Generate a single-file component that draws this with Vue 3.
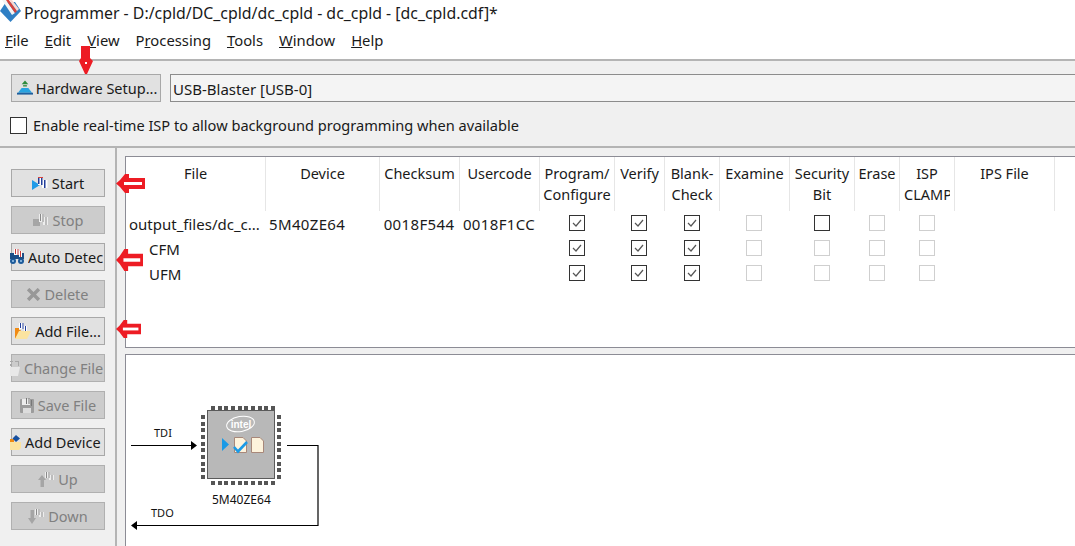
<script setup>
const menus = [
  { key: 'F', rest: 'ile' },
  { key: 'E', rest: 'dit' },
  { key: 'V', rest: 'iew' },
  { pre: 'P', key: 'r', rest: 'ocessing' },
  { key: 'T', rest: 'ools' },
  { key: 'W', rest: 'indow' },
  { key: 'H', rest: 'elp' }
]
const buttons = [
  { label: 'Start', icon: 'start' },
  { label: 'Stop', icon: 'stop', off: true },
  { label: 'Auto Detect', icon: 'auto', left: true, cut: true },
  { label: 'Delete', icon: 'delete', off: true },
  { label: 'Add File...', icon: 'add' },
  { label: 'Change File', icon: 'change', off: true, left: true },
  { label: 'Save File', icon: 'save', off: true },
  { label: 'Add Device', icon: 'device', left: true },
  { label: 'Up', icon: 'up', off: true },
  { label: 'Down', icon: 'down', off: true }
]
const headers = [
  { lines: ['File'] }, { lines: ['Device'] }, { lines: ['Checksum'] }, { lines: ['Usercode'] },
  { lines: ['Program/', 'Configure'] }, { lines: ['Verify'] }, { lines: ['Blank-', 'Check'] },
  { lines: ['Examine'] }, { lines: ['Security', 'Bit'] }, { lines: ['Erase'] },
  { lines: ['ISP', 'CLAMP'], narrow: true }, { lines: ['IPS File'] }
]
const rows = [
  { file: 'output_files/dc_c...', device: '5M40ZE64', checksum: '0018F544', usercode: '0018F1CC', sec: 'open' },
  { file: 'CFM', sub: true, sec: 'off' },
  { file: 'UFM', sub: true, sec: 'off' }
]
const pins = [0, 7, 13, 20, 27, 33, 40, 47, 53, 60]
const redArrows = ['a1', 'a2', 'a3']
</script>

<template>
  <div class="app">
    <header class="title">
      <svg class="logo" width="21" height="22" viewBox="0 0 21 22">
        <path d="M0 11 L6 2 L15 2 L21 11 L10.5 22 Z" fill="#2f7fc4" />
        <path d="M2 0 L6 0 L15 13 L12 15 Z" fill="#f4f4f4" />
        <path d="M6 0 L9 0 L17 11 L15 13 Z" fill="#d8433c" />
        <path d="M9 0 L12 0 L19 9 L17 11 Z" fill="#f7d9d2" />
      </svg>
      <span>Programmer - D:/cpld/DC_cpld/dc_cpld - dc_cpld - [dc_cpld.cdf]*</span>
    </header>

    <nav class="menu">
      <span v-for="m in menus" :key="m.key + m.rest">{{ m.pre }}<u>{{ m.key }}</u>{{ m.rest }}</span>
    </nav>

    <section class="toolbar">
      <div class="hw-row">
        <button class="btn hw">
          <svg width="16" height="16" viewBox="0 0 17 16">
            <path d="M8.5 0 L12 4 H5 Z" fill="#2e8b3c" />
            <rect x="6.5" y="5" width="4" height="1.4" fill="#2e8b3c" />
            <path d="M1 13 L5 8 H12 L16 13 Z" fill="#27a3e0" />
            <rect x="0" y="13" width="17" height="2" fill="#1f5f9e" />
          </svg>
          <span>Hardware Setup...</span>
        </button>
        <div class="combo">USB-Blaster [USB-0]</div>
      </div>
      <label class="isp">
        <span class="check-big"></span>
        <span>Enable real-time ISP to allow background programming when available</span>
      </label>
    </section>

    <main class="body">
      <aside class="side">
        <button v-for="b in buttons" :key="b.label" class="btn side-btn" :class="{ off: b.off, left: b.left, cut: b.cut }">
          <span class="ico">
            <svg v-if="b.icon === 'start'" width="16" height="13" viewBox="0 0 16 13">
              <path d="M0 3 L8 8 L0 13 Z" fill="#1f9be8" />
              <path d="M6 0 H11 V3 H15.5 V11 H10 V8 H6 Z" fill="#fff" />
              <path d="M6 0 H7.5 V7 H6 Z M9 0 H10.5 V8 H9 Z M12 3 H13.5 V11 H12 Z" fill="#233f9a" />
              <path d="M6 0 H11 V1 H6 Z" fill="#d8433c" />
            </svg>
            <svg v-else-if="b.icon === 'stop'" width="16" height="13" viewBox="0 0 16 13">
              <rect x="0" y="5" width="7" height="7" fill="#a6a6a6" />
              <path d="M6 0 H11 V3 H15 V11 H10 V8 H6 Z" fill="#eee" />
              <path d="M7 0 H8 V7 H7 Z M9.5 0 H10.5 V8 H9.5 Z M12.5 3 H13.5 V11 H12.5 Z" fill="#8a8a8a" />
            </svg>
            <svg v-else-if="b.icon === 'auto'" width="14" height="16" viewBox="0 0 14 16">
              <circle cx="3" cy="12" r="3" fill="#1c5a9a" />
              <circle cx="11" cy="12" r="3" fill="#1c5a9a" />
              <circle cx="3" cy="12" r="1" fill="#9cc8ec" />
              <circle cx="11" cy="12" r="1" fill="#9cc8ec" />
              <path d="M0 4 H14 V10 H0 Z" fill="#1c4d86" />
              <path d="M4 0 H9 V2 H12 V8 H9 V6 H4 Z" fill="#fff" />
              <path d="M5 0 H6 V5 H5 Z M7.5 0 H8.5 V6 H7.5 Z M10 2 H11 V8 H10 Z" fill="#c83a3a" />
            </svg>
            <svg v-else-if="b.icon === 'delete'" width="13" height="13" viewBox="0 0 12 12">
              <path d="M1 1 L11 11 M11 1 L1 11" stroke="#989898" stroke-width="3.2" />
            </svg>
            <svg v-else-if="b.icon === 'add'" width="16" height="16" viewBox="0 0 16 16">
              <path d="M0 5 H4 V7 H6 L0 16 Z" fill="#f08a12" />
              <path d="M4 8 H16 L12 16 H0 Z" fill="#fbe3a0" />
              <path d="M4 0 H9 V3 H12 V8 H9 V6 H4 Z" fill="#fff" />
              <path d="M5 0 H6 V5 H5 Z M7.5 0 H8.5 V6 H7.5 Z M10 3 H11 V8 H10 Z" fill="#233f9a" />
            </svg>
            <svg v-else-if="b.icon === 'change'" width="10" height="15" viewBox="0 0 10 15">
              <path d="M0 6 H10 L8 15 H0 Z" fill="#e8e8e8" />
              <path d="M0 0 H3 V1 H0 Z M5 0 H9 V1 H5 Z M8 1 H9 V5 H8 Z M0 3 H2 V5 H0 Z" fill="#a8a8a8" />
            </svg>
            <svg v-else-if="b.icon === 'save'" width="14" height="15" viewBox="0 0 14 15">
              <rect y="1" width="14" height="14" rx="1" fill="#9c9c9c" />
              <rect x="3" y="10" width="8" height="5" fill="#dcdcdc" />
              <rect x="2" y="1" width="8" height="6" fill="#ececec" />
              <path d="M6 0 H7 V6 H6 Z M8.5 0 H9.5 V6 H8.5 Z M11 2 H12 V8 H11 Z" fill="#777" />
            </svg>
            <svg v-else-if="b.icon === 'device'" width="11" height="15" viewBox="0 0 11 15">
              <path d="M0 7 H11 V13 L9 15 H0 Z" fill="#fbe3a0" />
              <path d="M0 4 H4 V7 H0 Z" fill="#ee8a14" />
              <path d="M6 0 L10 3.5 L6 7 L2.5 3.5 Z" fill="#164f9e" />
            </svg>
            <svg v-else-if="b.icon === 'up'" width="16" height="15" viewBox="0 0 16 15">
              <path d="M4 3 L8 8 H6 V15 H2.5 V8 H0 Z" fill="#a5a5a5" />
              <path d="M7 0 H12 V3 H16 V8 H11 V6 H7 Z" fill="#eee" />
              <path d="M8 0 H9 V6 H8 Z M10.5 0 H11.5 V6 H10.5 Z M13.5 3 H14.5 V8 H13.5 Z" fill="#8a8a8a" />
            </svg>
            <svg v-else-if="b.icon === 'down'" width="16" height="15" viewBox="0 0 16 15">
              <path d="M2.5 1 H6 V9 H8 L4 15 L0 9 H2.5 Z" fill="#a5a5a5" />
              <path d="M7 0 H12 V3 H16 V8 H11 V6 H7 Z" fill="#eee" />
              <path d="M8 0 H9 V6 H8 Z M10.5 0 H11.5 V6 H10.5 Z M13.5 3 H14.5 V8 H13.5 Z" fill="#8a8a8a" />
            </svg>
          </span>
          <span class="lbl">{{ b.label }}</span>
        </button>
      </aside>

      <div class="panels">
        <section class="table">
          <div v-for="h in headers" :key="h.lines[0]" class="th" :class="{ narrow: h.narrow }">
            <span v-for="l in h.lines" :key="l">{{ l }}</span>
          </div>
          <template v-for="r in rows" :key="r.file">
            <div class="td file" :class="{ sub: r.sub }">{{ r.file }}</div>
            <div class="td code">{{ r.device }}</div>
            <div class="td ctr code">{{ r.checksum }}</div>
            <div class="td ctr code">{{ r.usercode }}</div>
            <div class="td ctr" v-for="n in 3" :key="n">
              <span class="cb"><svg width="12" height="12" viewBox="0 0 12 12"><path d="M2 6 L5 9 L10 3" fill="none" stroke="#555" stroke-width="1.2" /></svg></span>
            </div>
            <div class="td ctr"><span class="cb dis"></span></div>
            <div class="td ctr"><span class="cb" :class="{ dis: r.sec === 'off' }"></span></div>
            <div class="td ctr"><span class="cb dis"></span></div>
            <div class="td ctr"><span class="cb dis"></span></div>
            <div class="td"></div>
          </template>
        </section>

        <section class="diagram">
          <svg class="chain" width="200" height="150" viewBox="0 0 200 150">
            <text x="28" y="41" class="t">TDI</text>
            <path d="M5 49.5 H68" stroke="#000" stroke-width="1.2" />
            <path d="M65 45 L71 49.5 L65 54 Z" fill="#000" />
            <g fill="#555">
              <rect v-for="p in pins" :key="'t' + p" :x="85 + p" y="10" width="4" height="4" />
              <rect v-for="p in pins" :key="'b' + p" :x="85 + p" y="85" width="4" height="4" />
              <rect v-for="p in pins" :key="'l' + p" x="75" :y="19 + p" width="4" height="4" />
              <rect v-for="p in pins" :key="'r' + p" x="151" :y="19 + p" width="4" height="4" />
            </g>
            <rect x="81.5" y="14.5" width="67" height="68" fill="#b8b8b8" stroke="#5a5a5a" />
            <ellipse cx="114.5" cy="28" rx="14" ry="7.5" fill="none" stroke="#fff" stroke-width="1" transform="rotate(-10 114.5 28)" />
            <text x="115" y="32" class="intel">intel</text>
            <path d="M96 42 L103 48.5 L96 55 Z" fill="#1a9ae6" />
            <path d="M108.5 41.5 H117 L120.5 45 V56.5 H108.5 Z" fill="#fdf3dc" stroke="#a8887a" />
            <path d="M108 51 L112 55.5 L121 46" fill="none" stroke="#1a9ae6" stroke-width="2.6" />
            <path d="M125.5 41.5 H134 L137.5 45 V56.5 H125.5 Z" fill="#fdf3dc" stroke="#a8887a" />
            <path d="M161 49.5 H192 V129.5 H10" fill="none" stroke="#000" stroke-width="1.2" />
            <path d="M11 125 L5 129.5 L11 134 Z" fill="#000" />
            <text x="86" y="108" class="t chip-name">5M40ZE64</text>
            <text x="25" y="121" class="t">TDO</text>
          </svg>
        </section>
      </div>
    </main>

    <svg class="arrow a-hw" width="14" height="28" viewBox="0 0 14 28">
      <path d="M2 0 H11 V12 L14 15 L8 28 H6 L0 15 L2 12 Z" fill="#ed1c24" />
      <rect x="6" y="16" width="2" height="2" fill="#fff" />
    </svg>
    <svg v-for="a in redArrows" :key="a" class="arrow" :class="a" viewBox="0 0 29 19" preserveAspectRatio="none">
      <path d="M0 9.5 L4 6 L9 0 H13 V4 H29 V15 H13 V19 H9 L4 13 Z" fill="#ed1c24" />
      <path d="M8 8 H26 V11 H8 Z" fill="#fff" />
    </svg>
  </div>
</template>

<style scoped>
.app {
  position: relative;
  width: 1075px;
  height: 546px;
  overflow: hidden;
  background: #f0f0f0;
  color: #1a1a1a;
  font-family: "Noto Sans", "Open Sans", sans-serif;
  font-size: 14.5px;
}
.title {
  height: 30px;
  box-sizing: border-box;
  background: #fff;
  display: flex;
  align-items: center;
  gap: 3px;
  padding-bottom: 4px;
  font-size: 15.87px;
  overflow: hidden;
}
.logo { margin-top: -4px; flex: none; }
.menu {
  height: 29px;
  box-sizing: border-box;
  background: #fff;
  display: flex;
  align-items: center;
  gap: 16px;
  padding: 0 0 9px 5px;
  font-size: 14.8px;
}
.toolbar {
  height: 89px;
  box-sizing: border-box;
  border-top: 2px solid #b4b4b4;
  border-bottom: 2px solid #b4b4b4;
  padding: 13px 0 0 11px;
}
.hw-row { display: flex; gap: 9px; }
.btn {
  font: inherit;
  color: inherit;
  background: #e1e1e1;
  border: 1px solid #a8a8a8;
  box-sizing: border-box;
  display: flex;
  align-items: center;
  justify-content: center;
  padding: 0;
}
.hw { width: 150px; height: 28px; gap: 3px; flex: none; padding-left: 2px; }
.combo {
  flex: 1;
  height: 28px;
  box-sizing: border-box;
  border: 1px solid #8c8c8c;
  border-right: none;
  background: #f4f4f4;
  padding-left: 2px;
  line-height: 28px;
  font-size: 15px;
}
.isp { display: flex; align-items: center; gap: 6px; margin-top: 13px; margin-left: -1px; font-size: 14.6px; }
.check-big { width: 15px; height: 15px; border: 1px solid #333; background: #fff; flex: none; }
.body { display: flex; height: 399px; }
.side {
  width: 117px;
  flex: none;
  box-sizing: border-box;
  border-right: 2px solid #b4b4b4;
  padding: 21px 0 0 11px;
  display: flex;
  flex-direction: column;
  gap: 9px;
}
.side-btn { width: 94px; height: 28px; gap: 4px; white-space: nowrap; position: relative; }
.side-btn.off { background: #cccccc; color: #808080; border-color: #b0b0b0; }
.side-btn.left { justify-content: flex-start; }
.ico { display: flex; flex: none; }
.side-btn.left .ico { margin-left: -2px; }
.side-btn.cut .lbl { width: 75px; overflow: hidden; }
.panels { flex: 1; padding: 8px 0 0 8px; display: flex; flex-direction: column; gap: 6px; min-width: 0; }
.table {
  height: 192px;
  flex: none;
  box-sizing: border-box;
  background: #fff;
  border: 1px solid #8c8c95;
  border-right: none;
  display: grid;
  grid-template-columns: 140px 114px 80px 80px 75px 50px 55px 70px 65px 45px 55px 100px 20px;
  grid-template-rows: 54px 25px 25px 25px;
  align-content: start;
  overflow: hidden;
}
.th {
  display: flex;
  flex-direction: column;
  align-items: center;
  padding-top: 6px;
  line-height: 21px;
  border-right: 1px solid #e6e6e6;
  box-sizing: border-box;
  overflow: hidden;
  white-space: nowrap;
}
.th.narrow span:last-child { width: 46px; overflow: hidden; }
.th:nth-child(12) { grid-column: 12; }
.td { display: flex; align-items: center; white-space: nowrap; min-width: 0; padding: 0 0 0 3px; box-sizing: border-box; font-size: 15px; }
.td.code { font-size: 15px; letter-spacing: 0.35px; }
.td.ctr { justify-content: center; padding-left: 0; padding-right: 2px; }
.td.file { grid-column: 1; }
.td.file.sub { padding-left: 23px; }
.cb {
  width: 16px;
  height: 16px;
  margin-bottom: 2px;
  box-sizing: border-box;
  border: 1px solid #333;
  background: #fff;
  display: flex;
  align-items: center;
  justify-content: center;
}
.cb.dis { border-color: #cfcfcf; }
.diagram {
  flex: 1;
  box-sizing: border-box;
  background: #fff;
  border: 1px solid #8c8c95;
  border-right: none;
  border-bottom: none;
  position: relative;
  overflow: hidden;
}
.chain { position: absolute; left: 0; top: 41px; }
.t { font: 11px "Noto Sans", sans-serif; fill: #111; }
.t.chip-name { font-size: 12px; }
.intel { font: bold 10px "Liberation Sans", Arial, sans-serif; fill: #fff; text-anchor: middle; }
.arrow { position: absolute; }
.a-hw { left: 79px; top: 46px; }
.a1 { left: 116px; top: 174px; width: 29px; height: 19px; }
.a2 { left: 116px; top: 249px; width: 27px; height: 22px; }
.a3 { left: 116px; top: 320px; width: 25px; height: 18px; }
</style>
